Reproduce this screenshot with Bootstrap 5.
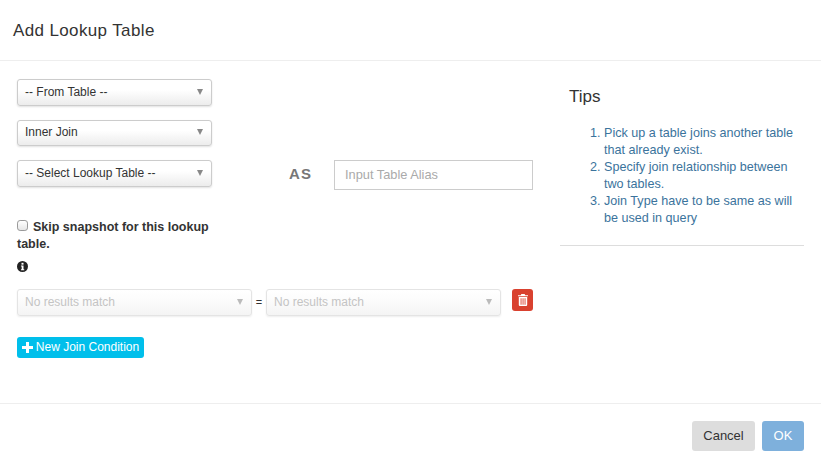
<!DOCTYPE html>
<html lang="en">
<head>
<meta charset="utf-8">
<title>Add Lookup Table</title>
<link href="https://cdn.jsdelivr.net/npm/bootstrap@5.3.0/dist/css/bootstrap.min.css" rel="stylesheet">
<style>
html,body{height:467px;overflow:hidden;background:#fff;}
body{font-family:"Liberation Sans",Arial,sans-serif;font-size:12px;color:#333;}
.dlg-head{height:61px;border-bottom:1px solid #eee;padding:2px 13px 0;}
.dlg-title{font-size:17px;line-height:20px;margin:0;font-weight:400;letter-spacing:.37px;color:#333;}
.dlg-body{height:342px;padding:18px 17px 0 17px;}
.form-side{width:516px;}
.tips-side{width:244px;margin-left:27px;}
.sel{width:195px;height:26.5px;padding:0 8px 1px 7px;font-size:12px;line-height:1;color:#333;border:1px solid #ccc;border-radius:3px;background:linear-gradient(#fff 0,#fff 40%,#ececec 100%);box-shadow:0 1px 2px rgba(0,0,0,.12);}
.sel:hover{color:#333;border-color:#ccc;}
.sel-caret{width:0;height:0;border-left:3.5px solid transparent;border-right:3.5px solid transparent;border-top:6px solid #888;}
.sel-gap{margin-bottom:14px;}
.sel-wide{width:235px;height:27px;}
.sel[disabled]{opacity:1;color:#c4c4c4;border-color:#e4e4e4;background:linear-gradient(#fff 0,#fcfcfc 40%,#f4f4f4 100%);box-shadow:0 1px 2px rgba(0,0,0,.07);}
.sel[disabled] .sel-caret{border-top-color:#bbb;}
.as-label{width:122px;font-size:15px;font-weight:700;letter-spacing:1.2px;color:#777;line-height:27px;padding-left:77px;}
.alias{width:199px;height:30px;border:1px solid #ccc;border-radius:0;font-size:12.8px;padding:0 10px 1px;box-shadow:none;}
.alias::placeholder{color:#aaa;}
.skip-block{width:210px;margin-top:29px;font-size:12.5px;line-height:17px;font-weight:700;color:#333;}
.skip-block label{display:inline;}
.skip-check{display:inline-block;width:11px;height:11px;margin:0 5px 0 0;border:1px solid #999;border-radius:2px;background:linear-gradient(#fff,#e6e6e6);vertical-align:0;float:none;}
.info-icon{display:block;margin-top:8px;width:11px;height:11px;}
.cond-row{margin-top:17px;}
.eq{width:14px;text-align:center;font-size:11px;line-height:27px;color:#333;}
.trash-btn{width:21px;height:22px;margin-left:11px;padding:0;background:#d9412f;border:0;border-radius:3px;}
.trash-btn:hover{background:#d9412f;}
.add-btn{margin-top:21px;height:21px;width:127px;padding:0;background:#00bfeb;border:0;border-radius:3px;color:#fff;font-size:12px;line-height:21px;gap:3px;}
.add-btn:hover{background:#00bfeb;color:#fff;}
.tips-title{font-size:17px;line-height:20px;font-weight:400;margin:8px 0 0 9px;color:#333;}
.tips-list{margin:18px 0 0;padding-left:44px;font-size:12.6px;line-height:17px;color:#3b739c;}
.tips-rule{margin:18px 0 0;border:0;border-top:1px solid #ddd;opacity:1;}
.dlg-foot{height:64px;border-top:1px solid #eee;padding:17px 17px 0 0;gap:7px;}
.foot-cancel,.foot-ok{height:30px;padding:0;font-size:13px;border:0;border-radius:3px;line-height:30px;}
.foot-cancel{width:63px;background:#ddd;color:#333;}
.foot-ok{width:42px;background:#7eb0dc;color:#fff;}
.foot-ok[disabled]{opacity:1;background:#7eb0dc;color:#fff;}
</style>
</head>
<body>
<div class="dlg-head d-flex align-items-center">
  <h4 class="dlg-title">Add Lookup Table</h4>
</div>
<div class="dlg-body d-flex">
  <div class="form-side">
    <div class="sel-gap">
      <button type="button" class="btn sel d-flex align-items-center justify-content-between"><span>-- From Table --</span><span class="sel-caret"></span></button>
    </div>
    <div class="sel-gap">
      <button type="button" class="btn sel d-flex align-items-center justify-content-between"><span>Inner Join</span><span class="sel-caret"></span></button>
    </div>
    <div class="d-flex align-items-start">
      <button type="button" class="btn sel d-flex align-items-center justify-content-between"><span>-- Select Lookup Table --</span><span class="sel-caret"></span></button>
      <div class="as-label">AS</div>
      <input type="text" class="form-control alias" placeholder="Input Table Alias">
    </div>
    <div class="skip-block">
      <input type="checkbox" class="form-check-input skip-check" id="skip"><label for="skip">Skip snapshot for this lookup table.</label>
      <svg class="info-icon" viewBox="0 0 12 12" aria-hidden="true"><circle cx="6" cy="6" r="6" fill="#222"/><rect x="4.9" y="2" width="2.2" height="2" fill="#fff"/><path d="M4.3 5h2.8v4h.8v1H4.3V9h.8V6h-.8z" fill="#fff"/></svg>
    </div>
    <div class="cond-row d-flex align-items-start">
      <button type="button" class="btn sel sel-wide d-flex align-items-center justify-content-between" disabled><span>No results match</span><span class="sel-caret"></span></button>
      <span class="eq">=</span>
      <button type="button" class="btn sel sel-wide d-flex align-items-center justify-content-between" disabled><span>No results match</span><span class="sel-caret"></span></button>
      <button type="button" class="btn trash-btn d-flex align-items-center justify-content-center" aria-label="Delete">
        <svg width="10" height="12" viewBox="0 0 10 12" aria-hidden="true"><path d="M3.4 0h3.2l.7 1.2H10v1.1H0V1.2h2.7zM.8 3h8.4v8a1 1 0 0 1-1 1H1.800a1 1 0 0 1-1-1zm1.800 1.300v6.400h.9V4.300zm2 0v6.400h.9V4.300zm2 0v6.400h.9V4.300z" fill="#fff" fill-rule="evenodd"/></svg>
      </button>
    </div>
    <button type="button" class="btn add-btn d-flex align-items-center justify-content-center">
      <svg width="11" height="11" viewBox="0 0 11 11" aria-hidden="true"><path d="M4 0h3v4h4v3H7v4H4V7H0V4h4z" fill="#fff"/></svg>
      <span>New Join Condition</span>
    </button>
  </div>
  <div class="tips-side">
    <h4 class="tips-title">Tips</h4>
    <ol class="tips-list">
      <li>Pick up a table joins another table that already exist.</li>
      <li>Specify join relationship between two tables.</li>
      <li>Join Type have to be same as will be used in query</li>
    </ol>
    <hr class="tips-rule">
  </div>
</div>
<div class="dlg-foot d-flex justify-content-end align-items-start">
  <button type="button" class="btn foot-cancel">Cancel</button>
  <button type="button" class="btn foot-ok" disabled>OK</button>
</div>
<script src="https://cdn.jsdelivr.net/npm/bootstrap@5.3.0/dist/js/bootstrap.bundle.min.js"></script>
</body>
</html>
